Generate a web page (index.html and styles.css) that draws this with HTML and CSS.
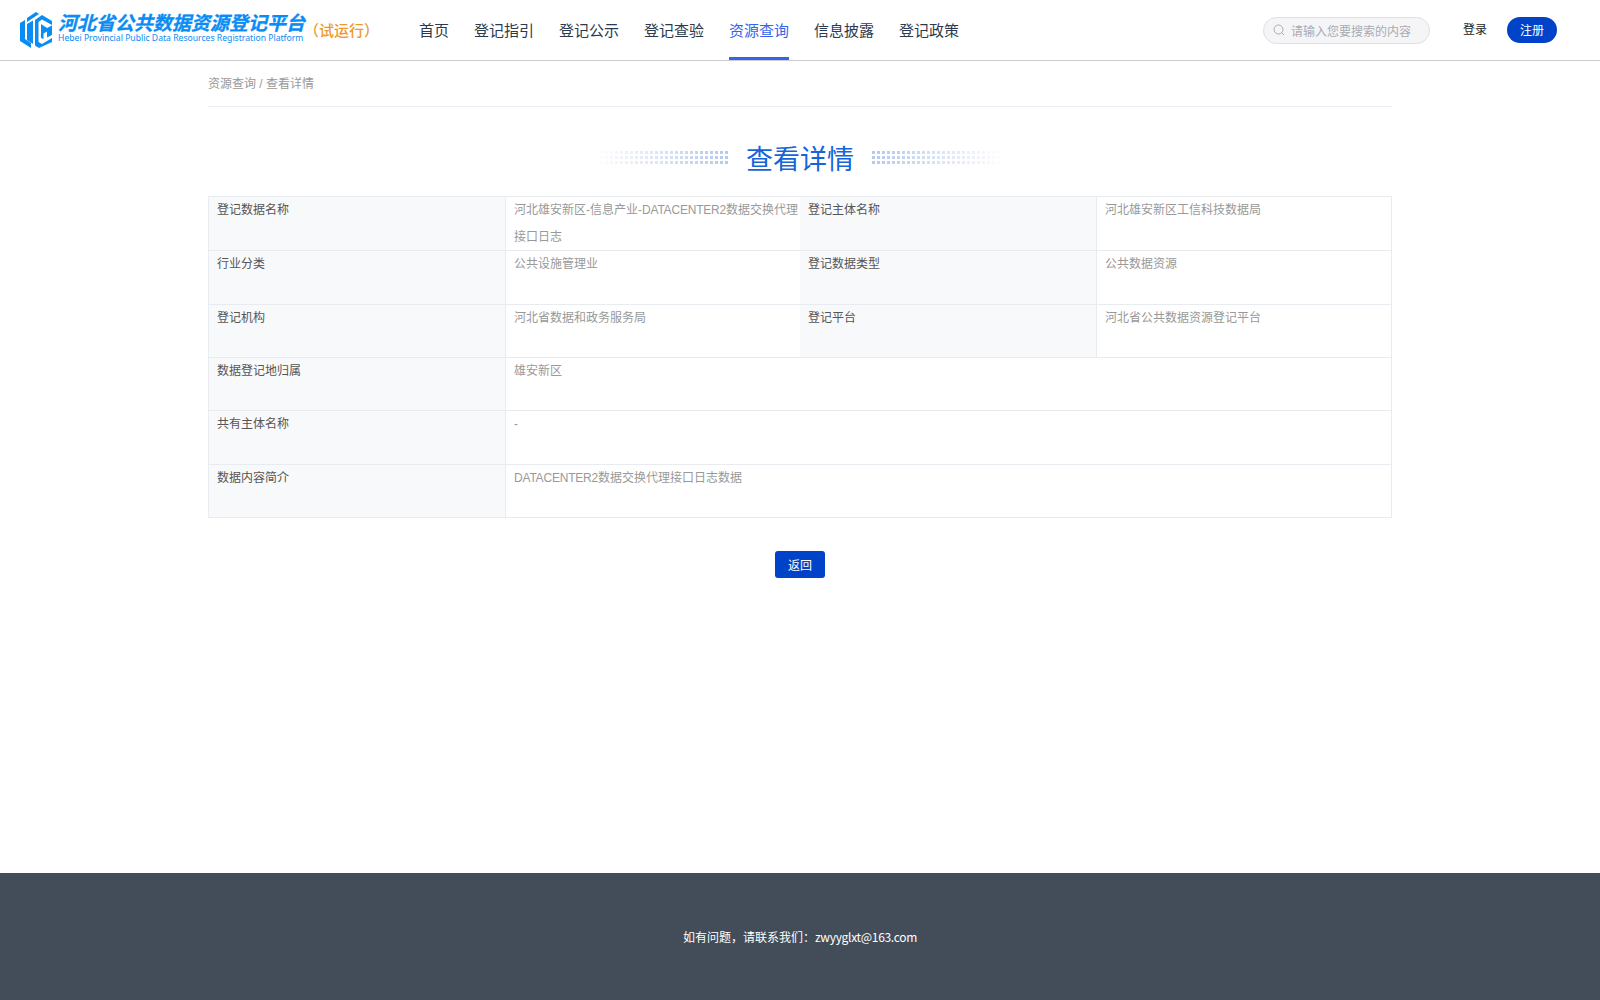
FILE: index.html
```html
<!DOCTYPE html>
<html lang="zh-CN">
<head>
    <meta charset="UTF-8">
    <title>查看详情</title>
    <link rel="stylesheet" href="styles.css">
</head>
<body>
    <header class="header">
        <a class="logo">
            <svg class="logo-icon" viewBox="0 0 32 36" width="32" height="36">
                <g fill="#0a8cf5">
                    <path d="M0 11 L5 8 L5 27 L11 31 L11 36 L0 29 Z"/>
                    <path d="M7 6 L16 0 L19 2 L7 10 Z"/>
                    <path d="M7 12 L13 8.500 L13 32 L7 28 Z"/>
                    <path d="M15 8 L22 3 L32 9 L32 13 L22 7.500 L18.500 10 L18.500 30 L22 32 L32 26 L32 30 L19 36 L15 33.500 Z"/>
                    <path d="M21 12 L27 16 L32 13.500 L32 23 L27 25.500 L27 19.500 L23.500 21.500 L23.500 27 L21 26 Z"/>
                </g>
            </svg>
            <div class="logo-text">
                <div class="logo-cn">河北省公共数据资源登记平台</div>
                <div class="logo-en">Hebei Provincial Public Data Resources Registration Platform</div>
            </div>
            <span class="logo-tag">（试运行）</span>
        </a>
        <nav class="nav">
            <a class="nav-item">首页</a>
            <a class="nav-item">登记指引</a>
            <a class="nav-item">登记公示</a>
            <a class="nav-item">登记查验</a>
            <a class="nav-item active">资源查询</a>
            <a class="nav-item">信息披露</a>
            <a class="nav-item">登记政策</a>
        </nav>
        <div class="search">
            <svg viewBox="0 0 12 12" width="12" height="12" fill="none" stroke="#a8abb2" stroke-width="1">
                <circle cx="5.500" cy="5.500" r="4.500"/>
                <path d="M9 9 L11 11"/>
            </svg>
            <span class="search-text">请输入您要搜索的内容</span>
        </div>
        <a class="login">登录</a>
        <a class="register">注册</a>
    </header>

    <main class="main">
        <div class="breadcrumb">资源查询 / 查看详情</div>
        <div class="title-row">
            <span class="dots dots-left"></span>
            <h1 class="title">查看详情</h1>
            <span class="dots dots-right"></span>
        </div>
        <div class="detail">
            <div class="label">登记数据名称</div>
            <div class="value">河北雄安新区-信息产业-<span class="latin">DATACENTER2</span>数据交换代理接口日志</div>
            <div class="label">登记主体名称</div>
            <div class="value">河北雄安新区工信科技数据局</div>

            <div class="label">行业分类</div>
            <div class="value">公共设施管理业</div>
            <div class="label">登记数据类型</div>
            <div class="value">公共数据资源</div>

            <div class="label">登记机构</div>
            <div class="value">河北省数据和政务服务局</div>
            <div class="label">登记平台</div>
            <div class="value">河北省公共数据资源登记平台</div>

            <div class="label">数据登记地归属</div>
            <div class="value wide">雄安新区</div>

            <div class="label">共有主体名称</div>
            <div class="value wide">-</div>

            <div class="label">数据内容简介</div>
            <div class="value wide"><span class="latin">DATACENTER2</span>数据交换代理接口日志数据</div>
        </div>
        <div class="actions">
            <button class="back">返回</button>
        </div>
    </main>

    <footer class="footer">如有问题，请联系我们：<span class="mail">zwyyglxt@163.com</span></footer>
</body>
</html>
```

FILE: styles.css
```css
* {
    box-sizing: border-box;
}

body {
    margin: 0;
    height: 1000px;
    display: flex;
    flex-direction: column;
    font-family: "Liberation Sans", "Noto Sans CJK SC", sans-serif;
    background-color: #fff;
}

.header {
    height: 61px;
    flex-shrink: 0;
    display: flex;
    align-items: center;
    padding-left: 20px;
    border-bottom: 1px solid #ccc;
}

.logo {
    display: flex;
    align-items: center;
    width: 399px;
}

.logo-icon {
    flex-shrink: 0;
    margin-right: 6px;
}

.logo-text {
    width: 246px;
    margin-bottom: 4px;
}

.logo-cn {
    font-size: 19px;
    line-height: 21px;
    font-weight: 700;
    font-style: italic;
    color: #0a8cf5;
    -webkit-text-stroke: 0.3px #0a8cf5;
    white-space: nowrap;
}

.logo-en {
    font-family: "Noto Sans", sans-serif;
    font-size: 8.650px;
    line-height: 9px;
    color: #0a8cf5;
    white-space: nowrap;
}

.logo-tag {
    font-family: "Noto Sans CJK SC", sans-serif;
    font-size: 15px;
    font-weight: 500;
    color: #ec9a2e;
    margin-bottom: 2px;
    white-space: nowrap;
}

.nav {
    display: flex;
    gap: 25px;
    height: 60px;
}

.nav-item {
    font-family: "Noto Sans CJK SC", sans-serif;
    font-size: 15px;
    line-height: 60px;
    color: #2b3a4e;
    border-bottom: 3px solid transparent;
    white-space: nowrap;
}

.nav-item.active {
    color: #3563e9;
    border-bottom-color: #3563e9;
}

.search {
    display: flex;
    align-items: center;
    width: 167px;
    height: 27px;
    margin-left: auto;
    padding-left: 9px;
    background-color: #f5f5f7;
    border: 1px solid #dcdfe6;
    border-radius: 14px;
}

.search-text {
    font-family: "Noto Sans CJK SC", sans-serif;
    font-size: 12px;
    color: #a8abb2;
    margin-left: 6px;
    white-space: nowrap;
}

.login {
    font-family: "Noto Sans CJK SC", sans-serif;
    font-size: 12px;
    line-height: 24px;
    color: #222;
    margin-left: 33px;
    margin-bottom: 2px;
}

.register {
    font-family: "Noto Sans CJK SC", sans-serif;
    width: 50px;
    height: 26px;
    margin-left: 20px;
    margin-right: 43px;
    font-size: 12px;
    line-height: 25px;
    text-align: center;
    color: #fff;
    background-color: #0043c8;
    border-radius: 13px;
}

.main {
    flex: 1;
    width: 1184px;
    margin: 0 auto;
}

.breadcrumb {
    height: 46px;
    line-height: 47px;
    font-size: 12px;
    color: #999;
    border-bottom: 1px solid #ebeef5;
}

.title-row {
    display: flex;
    justify-content: center;
    align-items: center;
    gap: 17px;
    height: 89px;
    padding-top: 12px;
}

.title {
    margin: 0;
    font-family: "Noto Sans CJK SC", sans-serif;
    font-size: 27px;
    font-weight: 400;
    color: #1565d8;
}

.dots {
    width: 135px;
    height: 15px;
    background-image: radial-gradient(circle, #b4c7ee 1.500px, transparent 1.800px);
    background-size: 5px 5px;
}

.dots-left {
    -webkit-mask-image: linear-gradient(to right, transparent, #000);
    mask-image: linear-gradient(to right, transparent, #000);
}

.dots-right {
    -webkit-mask-image: linear-gradient(to left, transparent, #000);
    mask-image: linear-gradient(to left, transparent, #000);
}

.detail {
    display: grid;
    grid-template-columns: 297px 295px 296px 296px;
    grid-template-rows: 54px 54px 53px 53px 54px 53px;
    border-top: 1px solid #e8ebf0;
}

.label,
.value {
    font-size: 12px;
    line-height: 27px;
    border-bottom: 1px solid #e8ebf0;
}

.label {
    padding: 0 8px;
    color: #555;
    background-color: #f8f9fb;
}

.label:nth-child(4n+1),
.label:nth-last-child(-n+6) {
    border-left: 1px solid #e8ebf0;
}

.value {
    padding-left: 8px;
    color: #999;
    border-left: 1px solid #e8ebf0;
}

.value:nth-child(4n),
.value.wide {
    border-right: 1px solid #e8ebf0;
}

.value.wide {
    grid-column: span 3;
}

.latin {
    letter-spacing: -0.2px;
}

.actions {
    display: flex;
    justify-content: center;
    margin-top: 33px;
}

.back {
    width: 50px;
    height: 27px;
    padding: 0;
    font-family: "Noto Sans CJK SC", sans-serif;
    font-size: 12px;
    color: #fff;
    background-color: #0043c8;
    border: none;
    border-radius: 3px;
}

.footer {
    height: 127px;
    flex-shrink: 0;
    line-height: 127px;
    text-align: center;
    font-family: "Noto Sans CJK SC", sans-serif;
    font-size: 12px;
    color: #fff;
    background-color: #424d59;
}

.mail {
    letter-spacing: -0.3px;
}
```
